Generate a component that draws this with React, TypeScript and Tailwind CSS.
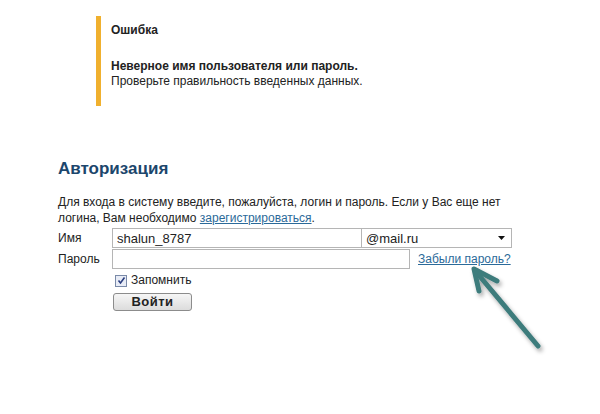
import React from "react";

function Arrow() {
  return (
    <svg
      className="absolute left-0 top-0 pointer-events-none"
      width="600"
      height="414"
      viewBox="0 0 600 414"
    >
      <defs>
        <filter id="sh" x="-20%" y="-20%" width="140%" height="140%">
          <feDropShadow dx="2" dy="3" stdDeviation="2" floodColor="#000" floodOpacity="0.35" />
        </filter>
      </defs>
      <g filter="url(#sh)" stroke="#3e7b7c" strokeWidth="5" strokeLinecap="round" strokeLinejoin="round" fill="none">
        <path d="M538 346 L477 273" />
        <path d="M479 291 L474 269 L497 281" />
      </g>
    </svg>
  );
}

export default function App() {
  return (
    <div className="relative w-[600px] h-[414px] overflow-hidden bg-white font-['Liberation_Sans',Arial,sans-serif] text-[12px] leading-[15px] text-[#222]">
      <div className="pt-[16px] pl-[96px]">
        <div className="border-l-[5px] border-[#f0b02e] pl-[10px] pt-[7px] pb-[17px]">
          <p className="font-bold">Ошибка</p>
          <p className="font-bold mt-[21px]">Неверное имя пользователя или пароль.</p>
          <p>Проверьте правильность введенных данных.</p>
        </div>
      </div>

      <div className="pl-[58px] pt-[53px]">
        <h2 className="text-[17px] leading-[20px] font-bold text-[#1c466c]">Авторизация</h2>
        <div className="mt-[15px] leading-[16px]">
          <p>Для входа в систему введите, пожалуйста, логин и пароль. Если у Вас еще нет</p>
          <p>
            логина, Вам необходимо <a href="#" className="text-[#2b6a99] underline">зарегистрироваться</a>.
          </p>
        </div>

        <div className="mt-[2px] flex flex-col">
          <div className="flex items-center h-[20px]">
            <span className="w-[54px]">Имя</span>
            <div className="w-[250px] h-[20px] border border-[#b5b5b5] flex items-center px-[4px] text-[13px]">shalun_8787</div>
            <div className="w-[150px] h-[20px] border border-l-0 border-[#b5b5b5] flex items-center justify-between px-[4px] text-[13px]">
              <span>@mail.ru</span>
              <svg width="7" height="4" viewBox="0 0 7 4" className="mr-[2px]">
                <path d="M0 0 L7 0 L3.5 4 Z" fill="#111" />
              </svg>
            </div>
          </div>
          <div className="flex items-center h-[20px] mt-[1px]">
            <span className="w-[54px]">Пароль</span>
            <div className="w-[298px] h-[20px] border border-[#b5b5b5]" />
            <a href="#" className="ml-[8px] text-[#2b6a99] underline">Забыли пароль?</a>
          </div>
          <div className="flex items-center mt-[4px] pl-[57px]">
            <span className="w-[12px] h-[12px] border border-[#7a8aa8] bg-[#e8ecf6] flex items-center justify-center">
              <svg width="9" height="9" viewBox="0 0 9 9">
                <path d="M1.5 4.5 L3.5 7 L7.5 1.5" stroke="#2b3f80" strokeWidth="1.6" fill="none" />
              </svg>
            </span>
            <span className="ml-[4px]">Запомнить</span>
          </div>
          <div className="pl-[55px] mt-[5px]">
            <button className="w-[79px] h-[18px] rounded-[3px] border border-[#8c8c8c] bg-gradient-to-b from-[#f6f6f6] to-[#dcdcdc] text-[13px] leading-[14px] font-bold tracking-[0.5px] text-[#222]">
              Войти
            </button>
          </div>
        </div>
      </div>

      <Arrow />
    </div>
  );
}
